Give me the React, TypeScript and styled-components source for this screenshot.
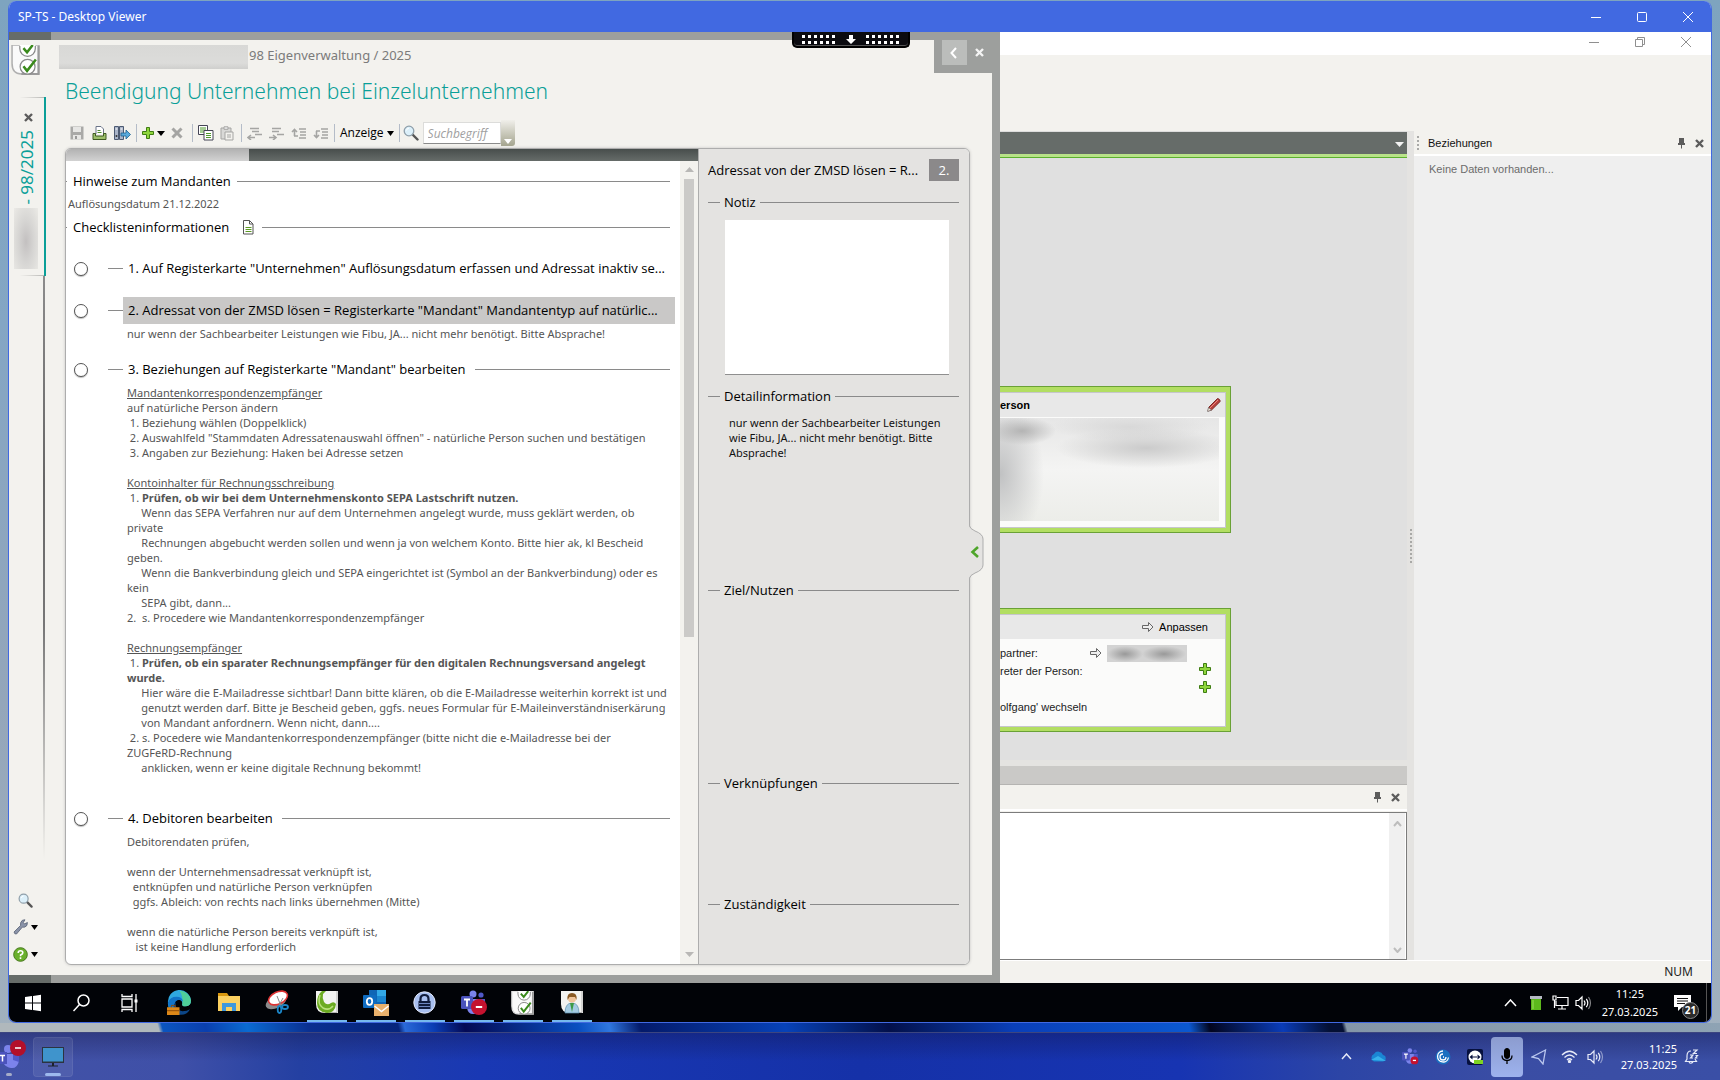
import React from "react";
import styled, { createGlobalStyle, css } from "styled-components";

const ui = `"Noto Sans", "Open Sans", sans-serif`;
const head = `"Open Sans", "Noto Sans", sans-serif`;
const classic = `"Liberation Sans", Arial, sans-serif`;

const Global = createGlobalStyle`
  * { box-sizing: border-box; }
  body { margin: 0; font: 11px/15px ${ui}; color: #555; }
  button { border: 0; padding: 0; margin: 0; background: none; font: inherit; color: inherit; }
  svg { display: block; flex: none; }
`;

/* ---------- desktop and window ---------- */

const Desktop = styled.div`
  min-height: 100vh;
  display: flex;
  flex-direction: column;
  background: linear-gradient(180deg, #7ea4bf 0%, #84a6c4 30%, #94a6ba 65%, #a3b2bf 100%);
`;
const Window = styled.section`
  flex: 1;
  margin: 1px 8px 0;
  border: 1px solid #4169e1;
  border-top: 0;
  border-radius: 8px;
  overflow: hidden;
  display: flex;
  flex-direction: column;
  background: #f3f2ee;
`;
const TitleBar = styled.header`
  height: 31px;
  display: flex;
  align-items: center;
  justify-content: space-between;
  padding-left: 9px;
  background: #4169e1;
  color: #fff;
  font-size: 12px;
`;
const WindowButtons = styled.div<{ $muted?: boolean }>`
  display: flex;
  height: ${(p) => (p.$muted ? "20px" : "100%")};
  color: ${(p) => (p.$muted ? "#8f8f8f" : "#fff")};
  padding-right: ${(p) => (p.$muted ? "2px" : "0")};
`;
const WindowButton = styled.button`
  width: 46px;
  height: 100%;
  display: grid;
  place-items: center;
`;
const Session = styled.main`
  position: relative;
  flex: 1;
  display: grid;
  grid-template-columns: minmax(0, 991fr) minmax(0, 711fr);
`;
const SessionGrip = styled.div`
  position: absolute;
  top: 0;
  left: 46%;
  width: 118px;
  height: 16px;
  display: flex;
  align-items: center;
  justify-content: center;
  background: #0b0b10;
  border: 2px solid #000;
  border-top: 0;
  border-radius: 0 0 5px 5px;
  box-shadow: inset 0 -1px 0 #555;
`;

/* ---------- checklist overlay ---------- */

const Overlay = styled.section`
  display: flex;
  flex-direction: column;
  min-width: 0;
`;
const Band = styled.div`
  height: 8px;
  background: linear-gradient(90deg, #666c69 42px, #9d9f9d 42px);
`;
const OverlayRow = styled.div`
  position: relative;
  flex: 1;
  display: flex;
  border-right: 8px solid #9d9f9d;
  background: #f3f2ee;
`;
const Corner = styled.div`
  position: absolute;
  top: 0;
  right: 0;
  width: 58px;
  height: 33px;
  display: flex;
  gap: 3px;
  padding-left: 8px;
  background: #9d9f9d;
`;
const CornerButton = styled.button<{ $raised?: boolean }>`
  width: ${(p) => (p.$raised ? "25px" : "18px")};
  height: 25px;
  display: grid;
  place-items: center;
  background: ${(p) => (p.$raised ? "#bbbdbb" : "none")};
`;
const Rail = styled.nav`
  width: 42px;
  flex: none;
  display: flex;
  flex-direction: column;
  align-items: flex-start;
  padding-top: 5px;
`;
const RailLogo = styled.div`
  margin: 0 0 22px 2px;
`;
const RailTab = styled.div`
  width: 37px;
  height: 179px;
  display: flex;
  flex-direction: column;
  align-items: center;
  padding: 16px 0 0 3px;
  border-right: 2px solid #0a9f98;
  background:
    linear-gradient(90deg, transparent 30%, #b9b9b6) top / 100% 1px no-repeat,
    linear-gradient(90deg, transparent 30%, #b9b9b6) bottom / 100% 1px no-repeat;
`;
const RailLabel = styled.span`
  writing-mode: vertical-rl;
  transform: rotate(180deg);
  margin: 8px 3px 0 0;
  font: 17px/18px ${ui};
  color: #0a9f98;
`;
const RailRedaction = styled.div`
  width: 24px;
  flex: 0 0 61px;
  margin: 3px 4px 0 0;
  background: radial-gradient(ellipse at 50% 55%, #c3c0c0, #d6d5d3 45%, #ebeae6);
`;
const RailLine = styled.div`
  flex: 1;
  width: 36px;
  margin-bottom: 33px;
  background: linear-gradient(180deg, #8c8c8c, #666 35%, #777 60%, transparent) right / 2px 100% no-repeat;
`;
const RailTools = styled.div`
  display: flex;
  flex-direction: column;
  gap: 11px;
  padding: 0 0 13px 4px;
`;
const RailTool = styled.button<{ $inset?: boolean }>`
  height: 16px;
  display: flex;
  align-items: center;
  gap: 3px;
  padding-left: ${(p) => (p.$inset ? "5px" : "0")};
`;
const Sheet = styled.div`
  flex: 1;
  min-width: 0;
  display: flex;
  flex-direction: column;
  padding: 5px 22px 10px 14px;
`;
const Crumb = styled.div`
  display: flex;
  height: 24px;
  margin-left: -6px;
  gap: 1px;
  font: 13px/20px ${ui};
  color: #7b7b7b;
`;
const CrumbRedaction = styled.div`
  width: 189px;
  height: 24px;
  background: linear-gradient(180deg, #d8d8d6, #dcdcda 75%, #cfcfcd);
`;
const Title = styled.h1`
  margin: 0;
  font: 300 21px/44px ${ui};
  color: #0a9f98;
`;
const Toolbar = styled.div`
  height: 35px;
  padding-top: 5px;
  display: flex;
  align-items: center;
  color: #000;
`;
const Tools = styled.div`
  height: 18px;
  display: flex;
  align-items: center;
  gap: 6px;
  padding: 0 5px;
  border-right: 1px solid #b4bcc8;
`;
const Tool = styled.button`
  display: flex;
  align-items: center;
  gap: 3px;
  min-width: 16px;
  font: 12px/16px ${head};
`;
const SearchLabel = styled.label`
  padding: 0 4px 0 3px;
`;
const SearchField = styled.input`
  width: 78px;
  height: 22px;
  border: 1px solid #dcdcda;
  border-bottom: 1px solid #8b8b8b;
  padding: 0 4px;
  font: italic 12px/18px ${head};
  &::placeholder { color: #a0a0a0; opacity: 1; }
`;
const ToolbarEnd = styled.button`
  width: 14px;
  height: 26px;
  display: flex;
  align-items: flex-end;
  justify-content: center;
  padding-bottom: 2px;
  background: linear-gradient(180deg, #f0efea, #a4a48e);
  border-radius: 0 0 3px 0;
`;
const Frame = styled.div`
  position: relative;
  flex: 1;
  min-height: 0;
  display: grid;
  grid-template-columns: minmax(0, 1fr) 271px;
  border: 1px solid #adadad;
  border-radius: 6px;
  background: #fff;
  box-shadow: 0 0 3px #c4c4c0;
`;
const List = styled.div`
  display: flex;
  flex-direction: column;
  overflow: hidden;
  border-radius: 5px 0 0 5px;
`;
const Progress = styled.div`
  height: 12px;
  display: flex;
`;
const ProgressPart = styled.div<{ $done?: boolean }>`
  flex: ${(p) => (p.$done ? "0 0 29%" : "1")};
  background: ${(p) =>
    p.$done ? "linear-gradient(180deg, #b2b2b2, #d2d2d2)" : "linear-gradient(180deg, #484e4c, #666c69)"};
`;
const ListBody = styled.div`
  flex: 1;
  min-height: 0;
  display: flex;
`;
const Scroll = styled.div`
  flex: 1;
  min-width: 0;
  padding: 10px 10px 0 0;
`;
const ScrollBar = styled.div`
  width: 18px;
  display: flex;
  flex-direction: column;
  align-items: center;
  padding: 6px 0 7px;
  background: #f3f2ee;
`;
const Thumb = styled.div`
  width: 10px;
  margin-top: 7px;
  flex: 0 0 58%;
  background: #cbcac8;
`;
const Push = styled.div`
  flex: 1;
`;
const Rule = styled.i<{ $w?: number }>`
  height: 1px;
  background: #8a8a8a;
  ${(p) => (p.$w ? css`flex: 0 0 ${p.$w}px;` : css`flex: 1;`)}
`;
const GroupHead = styled.h2<{ $top?: number }>`
  display: flex;
  align-items: center;
  gap: 6px;
  height: 20px;
  margin: ${(p) => p.$top || 0}px 0 0;
  font: 500 13px/20px ${head};
  color: #000;
`;
const GroupIcon = styled.span`
  margin: 0 2px 0 8px;
`;
const GroupText = styled.p`
  margin: 5px 0 0 2px;
`;
const Items = styled.ol`
  list-style: none;
  margin: 18px 0 0;
  padding: 0;
  display: flex;
  flex-direction: column;
  gap: 14px;
`;
const Item = styled.li`
  margin-right: -5px;
`;
const ItemHead = styled.label`
  display: flex;
  align-items: center;
  height: 27px;
  margin-bottom: 1px;
  padding-left: 8px;
`;
const Check = styled.input`
  appearance: none;
  width: 14px;
  height: 14px;
  margin: 0 20px 0 0;
  border: 1px solid #555;
  border-radius: 50%;
  background: #fff;
  box-shadow: 0 1px 1px #bbb;
`;
const ItemTitle = styled.span<{ $selected?: boolean }>`
  flex: 1;
  min-width: 0;
  height: 27px;
  display: flex;
  align-items: center;
  gap: 9px;
  padding: 0 5px;
  font: 500 13px/27px ${head};
  color: #000;
  white-space: nowrap;
  background: ${(p) => (p.$selected ? "#c9c8c7" : "none")};
`;
const ItemText = styled.div`
  padding: 1px 0 1px 61px;
  white-space: pre;
`;

/* ---------- detail pane ---------- */

const Detail = styled.aside`
  display: flex;
  flex-direction: column;
  padding: 10px 10px 0 9px;
  border-left: 1px solid #adadad;
  border-radius: 0 5px 5px 0;
  background: #e4e3e1;
`;
const DetailHead = styled.div`
  display: flex;
  align-items: center;
  justify-content: space-between;
  height: 22px;
  margin-bottom: 9px;
  font: 500 13px/22px ${head};
  color: #000;
  white-space: nowrap;
`;
const Badge = styled.span`
  width: 30px;
  text-align: center;
  background: #8b898a;
  color: #fff;
`;
const Section = styled.section<{ $h: number }>`
  height: ${(p) => p.$h}px;
`;
const SectionHead = styled.label`
  display: flex;
  align-items: center;
  gap: 4px;
  height: 24px;
  font: 500 13px/24px ${head};
  color: #000;
`;
const Note = styled.textarea`
  display: block;
  width: calc(100% - 27px);
  height: 155px;
  margin: 6px 0 0 17px;
  border: 0;
  border-bottom: 1px solid #8f8f8f;
  resize: none;
  background: #fff;
`;
const SectionText = styled.p`
  margin: 7px 10px 0 21px;
  color: #111;
  white-space: pre;
`;
const Handle = styled.button`
  position: absolute;
  left: 100%;
  top: 46%;
  width: 16px;
  height: 56px;
`;

/* ---------- application behind the overlay ---------- */

const Backdrop = styled.section`
  display: flex;
  flex-direction: column;
  min-width: 0;
  font-family: ${classic};
  color: #222;
`;
const AppTop = styled.div`
  height: 23px;
  display: flex;
  justify-content: flex-end;
  background: #fff;
`;
const AppRibbon = styled.div`
  height: 76px;
`;
const AppBody = styled.div`
  flex: 1;
  display: grid;
  grid-template-columns: minmax(0, 407fr) 7px minmax(0, 297fr);
  border-bottom: 1px solid #fff;
`;
const Work = styled.div`
  display: flex;
  flex-direction: column;
`;
const WorkBar = styled.div`
  height: 27px;
  display: flex;
  align-items: center;
  justify-content: flex-end;
  padding-right: 3px;
  border-top: 1px solid #ddd;
  border-bottom: 1px solid #5bb02f;
  background: linear-gradient(180deg, #666c69 22px, #b9e389 22px);
`;
const Canvas = styled.div`
  flex: 1;
  padding-top: 228px;
  display: flex;
  flex-direction: column;
  gap: 75px;
  background: #e0e0e0;
`;
const Card = styled.article<{ $h: number }>`
  width: 231px;
  height: ${(p) => p.$h}px;
  display: flex;
  flex-direction: column;
  border: 1px solid #6aa136;
  border-left: 0;
  box-shadow: inset -4px 0 0 #b2de62, inset 0 5px 0 #b2de62, inset 0 -4px 0 #b2de62;
  padding: 5px 4px 4px 0;
`;
const CardInner = styled.div`
  flex: 1;
  border: 1px solid #c6c6cc;
  border-left: 0;
  background: #fbfbfa;
`;
const CardHead = styled.header`
  height: 24px;
  display: flex;
  align-items: center;
  justify-content: space-between;
  padding-right: 3px;
  background: #e8e8e8;
  font-weight: 700;
  color: #000;
`;
const CardRedaction = styled.div`
  margin: 1px 6px 0 0;
  height: 103px;
  background:
    radial-gradient(ellipse 34px 14px at 22px 13px, #b4b4b4, transparent),
    radial-gradient(ellipse 44px 74px at 0 56px, #c0c1c2, transparent),
    radial-gradient(ellipse 90px 20px at 146px 30px, #cbcbcb, transparent),
    radial-gradient(ellipse 80px 14px at 130px 9px, #d8d8d8, transparent),
    linear-gradient(180deg, #e6e6e6, #f4f4f3 50%, #ecede9);
`;
const LinkButton = styled.button`
  display: flex;
  align-items: center;
  gap: 5px;
  margin-left: auto;
  padding-right: 14px;
  font-weight: 400;
`;
const CardGrid = styled.div`
  display: grid;
  grid-template-columns: 90px 97px 1fr;
  grid-auto-rows: 18px;
  align-items: center;
  padding-top: 5px;
  white-space: nowrap;
`;
const PartnerLink = styled.button`
  display: flex;
  align-items: center;
  gap: 5px;
`;
const NameRedaction = styled.span`
  width: 81px;
  height: 17px;
  background:
    radial-gradient(ellipse 18px 8px at 18px 9px, #999, transparent),
    radial-gradient(ellipse 22px 8px at 57px 9px, #999, transparent),
    #d3d3d3;
`;
const PlusCell = styled.button<{ $row: number }>`
  grid-column: 3;
  grid-row: ${(p) => p.$row};
  padding-left: 12px;
  height: 16px;
  display: flex;
`;
const CardLine = styled.span<{ $row: number }>`
  grid-column: 1 / 3;
  grid-row: ${(p) => p.$row};
`;
const Tray = styled.div`
  height: 19px;
  border-top: 0;
  border-bottom: 1px solid #b5b4b2;
  background: #cac9c7;
`;
const TrayGap = styled.div`
  height: 6px;
  background: #e4e3e1;
`;
const PaneHead = styled.header<{ $h: number }>`
  height: ${(p) => p.$h}px;
  display: flex;
  align-items: center;
  gap: 9px;
  padding: 1px 7px 0 3px;
  border-bottom: 2px solid #fff;
  background: #f3f2ee;
  color: #111;
`;
const Output = styled.div`
  display: flex;
  height: 148px;
  margin-top: 1px;
  border: 1px solid #7c7c7c;
  border-left: 0;
  background: #fff;
`;
const OutputText = styled.textarea`
  flex: 1;
  min-width: 0;
  border: 0;
  resize: none;
`;
const OutputScroll = styled.div`
  width: 17px;
  display: flex;
  flex-direction: column;
  align-items: center;
  justify-content: space-between;
  padding: 8px 0 6px;
  background: #f0f0f0;
  border-right: 1px solid #fff;
`;
const Splitter = styled.div`
  display: grid;
  place-items: center;
  background: #e4e3e1;
`;
const Relations = styled.aside`
  background: #efefef;
`;
const Empty = styled.p`
  margin: 6px 15px;
  color: #6c6c6c;
`;
const Status = styled.footer`
  height: 22px;
  display: flex;
  align-items: center;
  justify-content: flex-end;
  padding-right: 18px;
  font: 12px/20px ${ui};
`;

/* ---------- task bars ---------- */

const RemoteBar = styled.footer`
  height: 39px;
  display: flex;
  background: #010307;
  color: #fff;
`;
const SystemButton = styled.button`
  width: 48px;
  display: grid;
  place-items: center;
`;
const TaskButtons = styled.div`
  display: flex;
  flex: 1;
  padding-left: 2px;
`;
const TaskButton = styled.button<{ $open?: boolean }>`
  width: 49px;
  display: grid;
  place-items: center;
  background: ${(p) => (p.$open ? "linear-gradient(#76b9ed, #76b9ed) bottom / 40px 2px no-repeat" : "none")};
`;
const RemoteTray = styled.div`
  display: flex;
  align-items: center;
  gap: 6px;
  padding-right: 4px;
`;
const Clock = styled.time<{ $right?: boolean }>`
  margin-left: ${(p) => (p.$right ? "14px" : "4px")};
  font: 11px/${(p) => (p.$right ? "16px" : "18px")} ${ui};
  color: #fff;
  text-align: ${(p) => (p.$right ? "right" : "center")};
`;
const Notice = styled.button`
  position: relative;
  width: 26px;
  height: 38px;
  margin-left: 10px;
  display: grid;
  place-items: center start;
`;
const NoticeCount = styled.span`
  position: absolute;
  left: 8px;
  top: 18px;
  width: 17px;
  height: 17px;
  border: 1px solid #888;
  border-radius: 50%;
  background: #2b2b2b;
  text-align: center;
  font: 700 10px/15px ${ui};
`;
const Peek = styled.i`
  width: 1px;
  align-self: stretch;
  background: #555;
`;
const Wallpaper = styled.div`
  height: 9px;
  background: linear-gradient(75deg, #b0b8bc 0 154px, #0b55c0 158px, #0a3fae 200px, #0a6ad2 240px, #0a2f90 300px,
    #06257c 386px, #2a6ad8 392px, #0a3db4 420px, #040a55 450px, #0a4fc0 560px, #2f77e0 590px, #041a6a 620px,
    #0742b8 760px, #03104a 860px, #0a3fb8 980px, #0b58d0 1150px, #02051e 1170px, #0a3cb8 1240px, #041034 1285px,
    #041034 1298px, #8496a8 1302px, #8ea3b4 100%);
`;
const HostBar = styled.footer`
  height: 48px;
  display: flex;
  align-items: center;
  border-top: 1px solid #3c4580;
  background:
    linear-gradient(180deg, #10103c55, transparent 60%),
    linear-gradient(90deg, #4252a6 0, #3f50a8 180px, #2440a2 300px, #1938b4 480px, #1531a8 860px, #1734b2 1180px,
    #2c45a6 1340px, #3a4da4 1500px, #3a4fa6 100%);
`;
const HostTask = styled.button<{ $active?: boolean }>`
  position: relative;
  width: ${(p) => (p.$active ? "40px" : "33px")};
  height: 40px;
  border-radius: 4px;
  background: ${(p) => (p.$active ? "#ffffff14" : "none")};
  box-shadow: ${(p) => (p.$active ? "inset 0 0 0 1px #ffffff12" : "none")};
  display: grid;
  place-items: center;
`;
const Underline = styled.i<{ $w: number; $x: number; $c: string }>`
  position: absolute;
  bottom: 1px;
  left: ${(p) => p.$x}px;
  width: ${(p) => p.$w}px;
  height: 3px;
  border-radius: 2px;
  background: ${(p) => p.$c};
`;
const TeamsTask = styled.span`
  place-self: start;
`;
const HostTray = styled.div`
  display: flex;
  align-items: center;
  margin-left: auto;
  padding-right: 14px;
  color: #e6eaf8;
`;
const HostIcon = styled.button<{ $w?: number; $on?: boolean }>`
  width: ${(p) => p.$w || 32}px;
  height: 40px;
  border-radius: 4px;
  display: grid;
  place-items: center;
  background: ${(p) => (p.$on ? "linear-gradient(180deg, #8c9ccf, #9db2ee)" : "none")};
`;

/* ---------- icons ---------- */

const Minus = () => (
  <svg width="10" height="10" stroke="currentColor"><path d="M0 5.500h10" /></svg>
);
const Square = () => (
  <svg width="10" height="10" fill="none" stroke="currentColor"><rect x=".5" y=".5" width="9" height="9" rx="1" /></svg>
);
const Restore = () => (
  <svg width="10" height="10" fill="none" stroke="currentColor"><path d="M.5 2.500h7v7h-7zM2.500 2.500v-2h7v7h-2" /></svg>
);
const Cross = () => (
  <svg width="10" height="10" stroke="currentColor"><path d="M0 0l10 10M10 0L0 10" /></svg>
);
const BoldX = ({ c = "#5c5c5c" }: { c?: string }) => (
  <svg width="9" height="9" stroke={c} strokeWidth="2.400"><path d="M1 1l7 7M8 1L1 8" /></svg>
);
const Down = ({ c = "#000", w = 7 }: { c?: string; w?: number }) => (
  <svg width={w} height="5" viewBox="0 0 8 5" fill={c} preserveAspectRatio="none"><path d="M0 0h8L4 5z" /></svg>
);
const Up = () => (
  <svg width="9" height="5" fill="#b9b8b6"><path d="M0 5h9L4.500 0z" /></svg>
);
const Chevron = ({ dir, c = "#bdbdbd" }: { dir: "up" | "down"; c?: string }) => (
  <svg width="9" height="6" fill="none" stroke={c} strokeWidth="2">
    <path d={dir === "up" ? "M1 5l3.500-4L8 5" : "M1 1l3.500 4L8 1"} />
  </svg>
);
const Pin = () => (
  <svg width="9" height="11" fill="#5c5c5c"><path d="M2 0h5v5h1v2H5v3.500H4V7H1V5h1z" /></svg>
);
const Plus = () => (
  <svg width="12" height="12" viewBox="0 0 12 12">
    <path d="M4.500.500h3v4h4v3h-4v4h-3v-4h-4v-3h4z" fill="#8fd63c" stroke="#3f7d12" />
  </svg>
);
const Lens = ({ s = 16 }: { s?: number }) => (
  <svg width={s} height={s} viewBox="0 0 16 16">
    <path d="M9.500 9.500l5 5" stroke="#555" strokeWidth="2.400" strokeLinecap="round" />
    <circle cx="6" cy="6" r="4.800" fill="#dcf0fa" stroke="#8f9faa" strokeWidth="1.300" />
    <path d="M3.500 5.500a2.600 2.600 0 0 1 2.500-2.300" stroke="#fff" fill="none" />
  </svg>
);
const Arrow = () => (
  <svg width="12" height="10" fill="#eee" stroke="#666"><path d="M.5 3.500h6v-3L11 5l-4.500 4.500v-3h-6z" /></svg>
);
const Pencil = () => (
  <svg width="16" height="16">
    <path d="M2 14l1-4 8.500-8.500q2 0 2.800 2.800L5.500 13z" fill="#b8403c" stroke="#7a2a28" />
    <path d="M4 11L12 3" stroke="#e98a84" />
    <path d="M1.500 14.500l1-4 3 2.600z" fill="#efe6d8" stroke="#666" strokeWidth=".6" />
  </svg>
);
const CheckSheet = ({ w, h, frame }: { w: number; h: number; frame: string }) => (
  <svg width={w} height={h} viewBox="0 0 28 29">
    <path d="M1 0h26v28H10Q1 28 1 18z" fill="#fafafa" stroke={frame} strokeWidth="1.500" />
    <path d="M26.500 1v27H10" stroke="#9a9a9a" strokeWidth="2" fill="none" />
    <g fill="#fff" stroke="#8a8a8a" strokeWidth="1.200">
      <path d="M8.500 0v3.500a7.500 7.500 0 0 0 15 0V0z" stroke="none" />
      <path d="M8.500 1v2.500a7.500 7.500 0 0 0 15 0V1" />
      <circle cx="16" cy="21" r="7.200" />
    </g>
    <path d="M12 3l3.500 4L21 0M12 20.500l3.500 4.500L24 14" stroke="#3a8a1c" strokeWidth="2.400" fill="none" />
  </svg>
);
const Save = () => (
  <svg width="14" height="14"><path d="M.5.500h13v13h-13z" fill="#a9a9a7" /><path d="M3 1h8v5H3zM3 9h8v4.500H3z" fill="#e6e6e4" /><path d="M5 10h2v3H5z" fill="#999" /></svg>
);
const Print = () => (
  <svg width="15" height="15">
    <path d="M4 8V.5h5l2.500 2.500v5" fill="#fff" stroke="#6a7488" />
    <path d="M1 7.500h2.500V10h8V7.500H14v6H1z" fill="#9dc06a" stroke="#3f5a22" />
    <path d="M5.500 4.500h3M5.500 6.500h4" stroke="#4d8a2a" />
  </svg>
);
const Exit = () => (
  <svg width="17" height="15">
    <path d="M.5.500h4v13h-4zM5.500.500h4v13h-4z" fill="#a9b4c8" stroke="#4c5a72" />
    <path d="M1.500 3h2M6.500 3h2" stroke="#fff" /><circle cx="2.500" cy="10" r="1" fill="#333" />
    <path d="M7 7h5V4l4.500 4.500L12 13v-3H7z" fill="#58a9dc" stroke="#1c5f90" strokeWidth=".8" />
  </svg>
);
const Copy = () => (
  <svg width="16" height="16">
    <path d="M.5.500h9v9h-9z" fill="#fff" stroke="#445" /><path d="M2 3h6M2 5h6M2 7h4" stroke="#4d9a2a" />
    <path d="M6 5.500h9v9.500H6z" fill="#fff" stroke="#445" /><path d="M8 8.500h5M8 10.500h5M8 12.500h5" stroke="#4d9a2a" />
  </svg>
);
const Paste = () => (
  <svg width="14" height="15" fill="none" stroke="#a5a5a3"><path d="M1 2h10v11H1z" fill="#d9d9d7" /><path d="M4 .8h4v2.500H4z" fill="#eee" /><path d="M5 6h8v8H5z" fill="#f3f2ee" /><path d="M7 9h4M7 11h4" /></svg>
);
const Indent = ({ kind }: { kind: "out" | "in" | "up" | "down" }) => (
  <svg width="16" height="13" stroke="#a5a5a3" strokeWidth="1.600" fill="none">
    {kind === "out" && <path d="M3 1.500h9M5 4.500h7M8 7.500h7M1 10.500h7M4 8l-3 2.500L4 13" />}
    {kind === "in" && <path d="M3 1.500h9M3 4.500h7M8 7.500h7M0 10.500h7M4 8l3 2.500L4 13" />}
    {kind === "up" && <path d="M8 2h7M9 5h6M9 8h6M8 11h7M3.500 9V3M1 5l2.500-2.500L6 5M3 9h4" />}
    {kind === "down" && <path d="M8 2h7M9 5h6M9 8h6M8 11h7M3.500 4v6M1 8l2.500 2.500L6 8M3 4h4" />}
  </svg>
);
const Doc = () => (
  <svg width="11" height="15"><path d="M.5.500h6l3.500 3.500v10H.5z" fill="#fff" stroke="#555" /><path d="M6.500.500v3.500H10" fill="none" stroke="#555" /><path d="M2.500 7.500h6M2.500 9.500h6M2.500 11.500h6" stroke="#5b9a22" /></svg>
);
const Wrench = () => (
  <svg width="15" height="16"><path d="M1 13l6.500-6.500Q7 3 9.500 1.200L12 .8 10.300 3.500l1.200 1.400L14.400 3.500q.2 3.600-2.600 4.600-1.200.3-2.400 0L3.500 15q-2 .5-2.500-2z" fill="#8a93a8" stroke="#565f73" strokeWidth=".8" /></svg>
);
const Help = () => (
  <svg width="15" height="15">
    <circle cx="7.500" cy="7.500" r="6.800" fill="#6ab02c" stroke="#477a1c" />
    <path d="M5.200 6q0-2.200 2.300-2.200T9.800 5.800q0 1.300-2.200 2.300v1.200M7.500 10.300v1.600" stroke="#fff" strokeWidth="1.600" fill="none" />
  </svg>
);
const Dots = () => (
  <svg width="34" height="9" fill="#fff">
    {[0, 1, 2, 3, 4, 5].map((i) => (
      <React.Fragment key={i}><rect x={i * 6} y="0" width="3" height="3" /><rect x={i * 6} y="6" width="3" height="3" /></React.Fragment>
    ))}
  </svg>
);
const Grip = ({ n }: { n: number }) => (
  <svg width="2" height={n * 4 - 2} fill="#a9a9a7">
    {Array.from({ length: n }, (_, i) => <rect key={i} y={i * 4} width="2" height="2" />)}
  </svg>
);
const Speaker = () => (
  <svg width="17" height="16" fill="none" stroke="currentColor" strokeWidth="1.200">
    <path d="M1 5.500h2.500L7 2v12l-3.500-3.500H1zM9 5.500q2 2.500 0 5M11.300 3.800q3 4.200 0 8.400" /><path d="M13.500 2q4 6 0 12" opacity=".5" />
  </svg>
);
const Teams = ({ s, b }: { s: number; b?: [number, number, number] }) => (
  <svg width={s} height={s} viewBox="0 0 26 26">
    <circle cx="12" cy="4" r="3.500" fill="#7b83eb" /><circle cx="20" cy="5" r="2.600" fill="#5059c9" />
    <path d="M16 9h8v7q-1 5-6 5z" fill="#5059c9" /><path d="M6 9h12v9q-1 6-6 6t-6-6z" fill="#7b83eb" />
    <rect x="0" y="6" width="12" height="13" rx="1.500" fill="#4b53bc" />
    <path d="M3 9.500h6M6 9.500v7" stroke="#fff" strokeWidth="1.800" />
    {b && <><circle cx={b[0]} cy={b[1]} r={b[2]} fill="#c4122f" /><path d={`M${b[0] - b[2] / 2.5} ${b[1]}h${b[2] / 1.25}`} stroke="#fff" strokeWidth="2" /></>}
  </svg>
);
const Edge = () => (
  <svg width="25" height="26" viewBox="0 0 26 27">
    <path d="M1 13A12 12 0 0 1 25 11q0 6-6 6-4 0-3-3 0-4-4-4-6 1-6 8 0 6 6 8A12 12 0 0 1 1 13z" fill="#2fa8e0" />
    <path d="M13 .8A12 12 0 0 1 25 11q0 6-6 6-4 0-3-3 1-7-3-13.200z" fill="#4fcf9a" />
    <path d="M1 13q2-6 9-6 6 0 6.500 5Q12 8 9 12q-4 7 1 13Q1 22 1 13z" fill="#1173c8" />
    <path d="M9 13q-1 8 7 9 5 0 8-2-4 7-12 5.500Q3 22 9 13z" fill="#0c4687" />
    <path d="M0 18h13v8H0z" fill="#dc8718" /><path d="M0 21.500h13M4.500 18v-2h4v2" stroke="#8a4a08" fill="none" />
  </svg>
);
const Folder = () => (
  <svg width="22" height="20"><path d="M0 0h9l2 3H0z" fill="#d9980f" /><path d="M0 3h22v15H0z" fill="#fbd060" /><path d="M4 18V10h14v8h-4v-4H8v4z" fill="#3f98dc" /></svg>
);
const Snip = () => (
  <svg width="25" height="25">
    <ellipse cx="11" cy="12" rx="11" ry="6" fill="#8a8a8a" transform="rotate(-25 11 12)" />
    <ellipse cx="13" cy="8" rx="10" ry="6" fill="#fff" stroke="#d33" strokeWidth="1.600" transform="rotate(-25 13 8)" />
    <path d="M12 6l4 10M18 8l-5 9" stroke="#888" />
    <ellipse cx="14.500" cy="19.500" rx="1.800" ry="3.500" fill="none" stroke="#1b86c8" strokeWidth="1.800" />
    <ellipse cx="20" cy="17" rx="3" ry="2" fill="none" stroke="#1b86c8" strokeWidth="1.800" />
  </svg>
);
const Swirl = () => (
  <svg width="22" height="24">
    <path d="M0 0h22v22H9Q0 22 0 13z" fill="#f3f3f1" /><path d="M21 0v21.500H9" fill="none" stroke="#b5b5b5" />
    <path d="M6 0h4L7 3Q6 7 8 11q3 4 7 1 3-2 5 1-1 9-9 9Q1 21 1 12 1 4 6 0z" fill="#6cab22" />
    <path d="M4 4q-3 9 3 13 6 3 10-2" stroke="#b9e07a" strokeWidth="1.500" fill="none" />
  </svg>
);
const Outlook = () => (
  <svg width="26" height="26">
    <path d="M6 0h17v18H6z" fill="#1066b5" /><path d="M14 0h9v6h-9z" fill="#32a9e7" /><path d="M14 6h9v6h-9z" fill="#1a86d0" />
    <rect y="5" width="13" height="13" rx="1" fill="#0f6cc0" /><ellipse cx="6.500" cy="11.500" rx="2.700" ry="3.300" fill="none" stroke="#fff" strokeWidth="1.800" />
    <path d="M11 14h15v12H11z" fill="#e9b16c" /><path d="M11.500 16l7 5.500 7-5.500" fill="none" stroke="#fff" strokeWidth="1.500" />
  </svg>
);
const Lock = () => (
  <svg width="23" height="23"><circle cx="11.500" cy="11.500" r="10.700" fill="#a8bff0" stroke="#e3e9fa" /><path d="M7.500 11V8q0-4 4-4t4 4v3" fill="none" stroke="#101c3c" strokeWidth="2.200" /><path d="M5.500 10h12v8h-12z" fill="#101c3c" /><path d="M6 12.500h11M6 15.500h11" stroke="#6d86c0" /></svg>
);
const Person = () => (
  <svg width="22" height="24">
    <path d="M0 0h22v22H9Q0 22 0 13z" fill="#f3f3f1" /><path d="M21 0v21.500H9" fill="none" stroke="#b5b5b5" />
    <path d="M4 22q0-10 7-10t7 10z" fill="#a4cbe2" stroke="#5f8fae" strokeWidth=".7" /><path d="M9 12l2 9 2-9z" fill="#3d9a44" />
    <circle cx="11" cy="7.500" r="4" fill="#efc49a" /><path d="M6.500 9q-1-7 4.500-7t4.500 7l-1.500-3H8.500z" fill="#8a5a24" />
  </svg>
);

/* ---------- content ---------- */

const relationText = (
  <>
    <u>Mandantenkorrespondenzempfänger</u>
    {"\nauf natürliche Person ändern\n 1. Beziehung wählen (Doppelklick)\n 2. Auswahlfeld \"Stammdaten Adressatenauswahl öffnen\" - natürliche Person suchen und bestätigen\n 3. Angaben zur Beziehung: Haken bei Adresse setzen\n\n"}
    <u>Kontoinhalter für Rechnungsschreibung</u>
    {"\n 1. "}
    <b>Prüfen, ob wir bei dem Unternehmenskonto SEPA Lastschrift nutzen.</b>
    {"\n     Wenn das SEPA Verfahren nur auf dem Unternehmen angelegt wurde, muss geklärt werden, ob\nprivate\n     Rechnungen abgebucht werden sollen und wenn ja von welchem Konto. Bitte hier ak, kl Bescheid\ngeben.\n     Wenn die Bankverbindung gleich und SEPA eingerichtet ist (Symbol an der Bankverbindung) oder es\nkein\n     SEPA gibt, dann...\n2.  s. Procedere wie Mandantenkorrespondenzempfänger\n\n"}
    <u>Rechnungsempfänger</u>
    {"\n 1. "}
    <b>Prüfen, ob ein sparater Rechnungsempfänger für den digitalen Rechnungsversand angelegt</b>
    {"\n"}
    <b>wurde.</b>
    {"\n     Hier wäre die E-Mailadresse sichtbar! Dann bitte klären, ob die E-Mailadresse weiterhin korrekt ist und\n     genutzt werden darf. Bitte je Bescheid geben, ggfs. neues Formular für E-Maileinverständniserkärung\n     von Mandant anfordnern. Wenn nicht, dann....\n 2. s. Pocedere wie Mandantenkorrespondenzempfänger (bitte nicht die e-Mailadresse bei der\nZUGFeRD-Rechnung\n     anklicken, wenn er keine digitale Rechnung bekommt!\n\n"}
  </>
);

type Entry = { title: string; full?: boolean; selected?: boolean; text?: React.ReactNode };
const entries: Entry[] = [
  { title: '1. Auf Registerkarte "Unternehmen" Auflösungsdatum erfassen und Adressat inaktiv se...', full: true },
  {
    title: '2. Adressat von der ZMSD lösen = Registerkarte "Mandant" Mandantentyp auf natürlic...',
    full: true,
    selected: true,
    text: "nur wenn der Sachbearbeiter Leistungen wie Fibu, JA... nicht mehr benötigt. Bitte Absprache!",
  },
  { title: '3. Beziehungen auf Registerkarte "Mandant" bearbeiten', text: relationText },
  {
    title: "4. Debitoren bearbeiten",
    text: "Debitorendaten prüfen,\n\nwenn der Unternehmensadressat verknüpft ist,\n  entknüpfen und natürliche Person verknüpfen\n  ggfs. Ableich: von rechts nach links übernehmen (Mitte)\n\nwenn die natürliche Person bereits verknpüft ist,\n   ist keine Handlung erforderlich",
  },
];

function Caption({ children, htmlFor }: { children: React.ReactNode; htmlFor?: string }) {
  return (
    <SectionHead htmlFor={htmlFor}>
      <Rule $w={12} />
      {children}
      <Rule />
    </SectionHead>
  );
}

function Checklist() {
  return (
    <Overlay>
      <Band />
      <OverlayRow>
        <Rail>
          <RailLogo><CheckSheet w={29} h={30} frame="#b0b0b0" /></RailLogo>
          <RailTab>
            <button aria-label="Schließen"><BoldX /></button>
            <RailLabel>- 98/2025</RailLabel>
            <RailRedaction />
          </RailTab>
          <RailLine />
          <RailTools>
            <RailTool $inset aria-label="Suchen"><Lens s={15} /></RailTool>
            <RailTool aria-label="Werkzeuge"><Wrench /><Down /></RailTool>
            <RailTool aria-label="Hilfe"><Help /><Down /></RailTool>
          </RailTools>
        </Rail>
        <Sheet>
          <Crumb><CrumbRedaction />98 Eigenverwaltung / 2025</Crumb>
          <Title>Beendigung Unternehmen bei Einzelunternehmen</Title>
          <Toolbar>
            <Tools>
              <Tool aria-label="Speichern"><Save /></Tool>
              <Tool aria-label="Drucken"><Print /></Tool>
              <Tool aria-label="Beenden"><Exit /></Tool>
            </Tools>
            <Tools>
              <Tool aria-label="Neu"><Plus /><Down c="#000" w={8} /></Tool>
              <Tool aria-label="Löschen"><svg width="12" height="12" stroke="#a5a5a3" strokeWidth="3"><path d="M1.500 1.500l9 9M10.500 1.500l-9 9" /></svg></Tool>
            </Tools>
            <Tools>
              <Tool aria-label="Kopieren"><Copy /></Tool>
              <Tool aria-label="Einfügen"><Paste /></Tool>
            </Tools>
            <Tools>
              <Tool aria-label="Ausrücken"><Indent kind="out" /></Tool>
              <Tool aria-label="Einrücken"><Indent kind="in" /></Tool>
              <Tool aria-label="Nach oben"><Indent kind="up" /></Tool>
              <Tool aria-label="Nach unten"><Indent kind="down" /></Tool>
            </Tools>
            <Tools><Tool>Anzeige<Down /></Tool></Tools>
            <SearchLabel htmlFor="term"><Lens /></SearchLabel>
            <SearchField id="term" placeholder="Suchbegriff" aria-label="Suchbegriff" />
            <ToolbarEnd aria-label="Optionen"><Down c="#fff" w={8} /></ToolbarEnd>
          </Toolbar>
          <Frame>
            <List>
              <Progress><ProgressPart $done /><ProgressPart /></Progress>
              <ListBody>
                <Scroll>
                  <GroupHead><Rule $w={1} />Hinweise zum Mandanten<Rule /></GroupHead>
                  <GroupText>Auflösungsdatum 21.12.2022</GroupText>
                  <GroupHead $top={6}>
                    <Rule $w={1} />Checklisteninformationen<GroupIcon><Doc /></GroupIcon><Rule />
                  </GroupHead>
                  <Items>
                    {entries.map((e) => (
                      <Item key={e.title}>
                        <ItemHead>
                          <Check type="checkbox" />
                          <Rule $w={15} />
                          <ItemTitle $selected={e.selected}>{e.title}{!e.full && <Rule />}</ItemTitle>
                        </ItemHead>
                        {e.text && <ItemText>{e.text}</ItemText>}
                      </Item>
                    ))}
                  </Items>
                </Scroll>
                <ScrollBar><Up /><Thumb /><Push /><Down c="#b9b8b6" w={9} /></ScrollBar>
              </ListBody>
            </List>
            <Detail>
              <DetailHead>Adressat von der ZMSD lösen = R...<Badge>2.</Badge></DetailHead>
              <Section $h={194}><Caption htmlFor="note">Notiz</Caption><Note id="note" /></Section>
              <Section $h={194}>
                <Caption>Detailinformation</Caption>
                <SectionText>{"nur wenn der Sachbearbeiter Leistungen\nwie Fibu, JA... nicht mehr benötigt. Bitte\nAbsprache!"}</SectionText>
              </Section>
              <Section $h={193}><Caption>Ziel/Nutzen</Caption></Section>
              <Section $h={121}><Caption>Verknüpfungen</Caption></Section>
              <Caption>Zuständigkeit</Caption>
            </Detail>
            <Handle aria-label="Einklappen">
              <svg width="16" height="56">
                <path d="M0 1q1 4 6 6 8 3 8 8v26q0 5-8 8-5 2-6 6" fill="#e4e3e1" stroke="#adadad" />
                <path d="M9 23l-5.500 5L9 33" fill="none" stroke="#4ea52a" strokeWidth="2.600" />
              </svg>
            </Handle>
          </Frame>
        </Sheet>
        <Corner>
          <CornerButton $raised aria-label="Zurück">
            <svg width="9" height="12" fill="none" stroke="#fff" strokeWidth="2"><path d="M6 1L1.500 6l4.500 5" /></svg>
          </CornerButton>
          <CornerButton aria-label="Schließen"><BoldX c="#f4f4f4" /></CornerButton>
        </Corner>
      </OverlayRow>
      <Band />
    </Overlay>
  );
}

function Background() {
  return (
    <Backdrop>
      <AppTop>
        <WindowButtons $muted>
          <WindowButton aria-label="Minimieren"><Minus /></WindowButton>
          <WindowButton aria-label="Wiederherstellen"><Restore /></WindowButton>
          <WindowButton aria-label="Schließen"><Cross /></WindowButton>
        </WindowButtons>
      </AppTop>
      <AppRibbon />
      <AppBody>
        <Work>
          <WorkBar><Down c="#f2f2f2" w={9} /></WorkBar>
          <Canvas>
            <Card $h={147}>
              <CardInner>
                <CardHead>erson<Pencil /></CardHead>
                <CardRedaction />
              </CardInner>
            </Card>
            <Card $h={124}>
              <CardInner>
                <CardHead><LinkButton><Arrow />Anpassen</LinkButton></CardHead>
                <CardGrid>
                  <span>partner:</span>
                  <PartnerLink aria-label="Partner"><Arrow /><NameRedaction /></PartnerLink>
                  <CardLine $row={2}>reter der Person:</CardLine>
                  <PlusCell $row={2} aria-label="Hinzufügen"><Plus /></PlusCell>
                  <PlusCell $row={3} aria-label="Hinzufügen"><Plus /></PlusCell>
                  <CardLine $row={4}>olfgang' wechseln</CardLine>
                </CardGrid>
              </CardInner>
            </Card>
          </Canvas>
          <TrayGap />
          <Tray />
          <PaneHead $h={26}><Push /><Pin /><BoldX /></PaneHead>
          <Output>
            <OutputText aria-label="Ausgabe" />
            <OutputScroll><Chevron dir="up" /><Chevron dir="down" /></OutputScroll>
          </Output>
        </Work>
        <Splitter><Grip n={9} /></Splitter>
        <Relations>
          <PaneHead $h={25}><Grip n={4} />Beziehungen<Push /><Pin /><BoldX /></PaneHead>
          <Empty>Keine Daten vorhanden...</Empty>
        </Relations>
      </AppBody>
      <Status>NUM</Status>
    </Backdrop>
  );
}

function RemoteTaskbar() {
  return (
    <RemoteBar>
      <SystemButton aria-label="Start">
        <svg width="16" height="18" fill="#fff"><path d="M0 3l7-1v6.500H0zM8 1.900L16 .700v7.800H8zM0 9.500h7V16l-7-1zM8 9.500h8v7.800l-8-1.200z" /></svg>
      </SystemButton>
      <SystemButton aria-label="Suche">
        <svg width="17" height="18" fill="none" stroke="#fff" strokeWidth="1.500"><circle cx="10.500" cy="6.500" r="5.500" /><path d="M6.500 10.500L.5 17" /></svg>
      </SystemButton>
      <SystemButton aria-label="Aufgabenansicht">
        <svg width="17" height="18" fill="none" stroke="#fff" strokeWidth="1.300"><path d="M1 5h10v8H1zM1 0v2.500h10V0M1 18v-2.500h10V18M15 0v18" /><path d="M13.500 5.500h3v3h-3z" fill="#fff" stroke="none" /></svg>
      </SystemButton>
      <TaskButtons>
        <TaskButton aria-label="Edge"><Edge /></TaskButton>
        <TaskButton aria-label="Explorer"><Folder /></TaskButton>
        <TaskButton aria-label="Snipping"><Snip /></TaskButton>
        <TaskButton $open aria-label="Arbeitsplatz"><Swirl /></TaskButton>
        <TaskButton $open aria-label="Outlook"><Outlook /></TaskButton>
        <TaskButton $open aria-label="Tresor"><Lock /></TaskButton>
        <TaskButton $open aria-label="Teams"><Teams s={26} b={[18, 17, 8]} /></TaskButton>
        <TaskButton $open aria-label="Checkliste"><CheckSheet w={23} h={24} frame="#ddd" /></TaskButton>
        <TaskButton $open aria-label="Mandant"><Person /></TaskButton>
      </TaskButtons>
      <RemoteTray>
        <svg width="16" height="8" fill="none" stroke="#fff" strokeWidth="1.500"><path d="M1 7l5.500-6L12 7" /></svg>
        <svg width="20" height="16"><path d="M5 3h10v12H5z" fill="#5cb81c" /><path d="M4 1h12v3H4z" fill="#b5b9c4" /><path d="M7 5v9" stroke="#9be05a" /></svg>
        <svg width="17" height="15" fill="none" stroke="#fff" strokeWidth="1.200"><path d="M5 2.500h11v8H4V6M10 10.500v3M6 14h8M1 1h3v4H1zM2.500 5v8" /></svg>
        <Speaker />
        <Clock>11:25<br />27.03.2025</Clock>
        <Notice aria-label="Benachrichtigungen">
          <svg width="17" height="16"><path d="M0 0h17v12h-9l-4 4v-4H0z" fill="#fff" /><path d="M3 3.500h11M3 6h11M3 8.500h8" stroke="#111" /></svg>
          <NoticeCount>21</NoticeCount>
        </Notice>
        <Peek />
      </RemoteTray>
    </RemoteBar>
  );
}

function HostTaskbar() {
  return (
    <HostBar>
      <HostTask aria-label="Teams">
        <TeamsTask>
          <svg width="27" height="34">
            <circle cx="8" cy="12" r="4" fill="#7b83eb" /><path d="M4 17h15v7q-2 8-8 7-5-1-7-4z" fill="#7b83eb" /><path d="M13 15h6v10l-6-2z" fill="#5059c9" />
            <path d="M0 15h7v12H0z" fill="#4b53bc" /><path d="M0 18.500h5M2.500 18.500v6" stroke="#fff" strokeWidth="1.500" />
            <circle cx="18" cy="11" r="8" fill="#b3102a" /><path d="M15 11h6" stroke="#e9c6cc" strokeWidth="2" />
          </svg>
        </TeamsTask>
        <Underline $x={6} $w={6} $c="#a5acc8" />
      </HostTask>
      <HostTask $active aria-label="Desktop Viewer">
        <svg width="22" height="20"><path d="M0 0h22v16H0z" fill="#2b3440" /><path d="M1 1h20v13.500H1z" fill="#3f94cc" /><path d="M10 16h2v2.500h-2zM6 18.500h10v1H6z" fill="#1c222c" /></svg>
        <Underline $x={12} $w={16} $c="#9db9ee" />
      </HostTask>
      <HostTray>
        <HostIcon aria-label="Mehr"><svg width="11" height="7" fill="none" stroke="currentColor" strokeWidth="1.500"><path d="M1 6l4.500-5L10 6" /></svg></HostIcon>
        <HostIcon aria-label="OneDrive"><svg width="17" height="11"><path d="M4 10.500a4 4 0 0 1 0-7.500 5 5 0 0 1 9 1 3.300 3.300 0 0 1 0 6.500z" fill="#1a86d4" /><path d="M1 9l7-4 8 5z" fill="#38b2ec" /></svg></HostIcon>
        <HostIcon aria-label="Teams"><Teams s={17} b={[19, 19, 6]} /></HostIcon>
        <HostIcon aria-label="Citrix"><svg width="16" height="16" fill="none" stroke="#fff" strokeWidth="1.300"><circle cx="8" cy="8" r="7.500" fill="#1a6fc0" stroke="none" /><path d="M8 2a5.500 5.500 0 1 0 5.500 6.500M8 5a3 3 0 1 0 3 3M8 8h1" /></svg></HostIcon>
        <HostIcon aria-label="TeamViewer"><svg width="16" height="16"><rect width="16" height="16" rx="2" fill="#06103e" /><circle cx="8" cy="8" r="6.500" fill="#fff" /><path d="M2.500 8l3-2.500v5zM13.500 8l-3-2.500v5zM5 7.400h6v1.200H5z" fill="#06103e" /><path d="M7 11h9v4H7z" fill="#7ed321" /></svg></HostIcon>
        <HostIcon $on aria-label="Mikrofon"><svg width="12" height="17" fill="none" stroke="#000"><rect x="3.500" y=".5" width="5" height="10" rx="2.500" fill="#000" /><path d="M1 7.500q0 5 5 5t5-5M6 12.500V16" strokeWidth="1.300" /></svg></HostIcon>
        <HostIcon aria-label="Standort"><svg width="16" height="16" fill="none" stroke="#b9c6ee" strokeWidth="1.300"><path d="M14.500 1L1 8l6.500 1.500L12 15z" /></svg></HostIcon>
        <HostIcon $w={30} aria-label="WLAN"><svg width="17" height="13" fill="none" stroke="currentColor" strokeWidth="1.300"><path d="M1 5q7.500-7.500 15 0M3.500 7.500q5-5 10 0M6 10q2.500-2.500 5 0" /><circle cx="8.500" cy="11.500" r="1" fill="currentColor" /></svg></HostIcon>
        <HostIcon $w={22} aria-label="Lautstärke"><Speaker /></HostIcon>
        <Clock $right>11:25<br />27.03.2025</Clock>
        <HostIcon $w={29} aria-label="Mitteilungen"><svg width="15" height="16" fill="none" stroke="currentColor" strokeWidth="1.200"><path d="M7 2Q3 2 3 7v3l-1.500 2.500h11L11 10M5 13q1.500 2.500 4 0M9 1h4L9.500 4.500H13M6 6h3l-2.500 3H9M11.500 6.500h2l-2 2.500h2" /></svg></HostIcon>
      </HostTray>
    </HostBar>
  );
}

export default function App() {
  return (
    <Desktop>
      <Global />
      <Window>
        <TitleBar>
          SP-TS - Desktop Viewer
          <WindowButtons>
            <WindowButton aria-label="Minimieren"><Minus /></WindowButton>
            <WindowButton aria-label="Maximieren"><Square /></WindowButton>
            <WindowButton aria-label="Schließen"><Cross /></WindowButton>
          </WindowButtons>
        </TitleBar>
        <Session>
          <Checklist />
          <Background />
          <SessionGrip>
            <Dots />
            <svg width="30" height="9" fill="#fff"><path d="M13 0h4v4h3l-5 5-5-5h3z" /></svg>
            <Dots />
          </SessionGrip>
        </Session>
        <RemoteTaskbar />
      </Window>
      <Wallpaper />
      <HostTaskbar />
    </Desktop>
  );
}
